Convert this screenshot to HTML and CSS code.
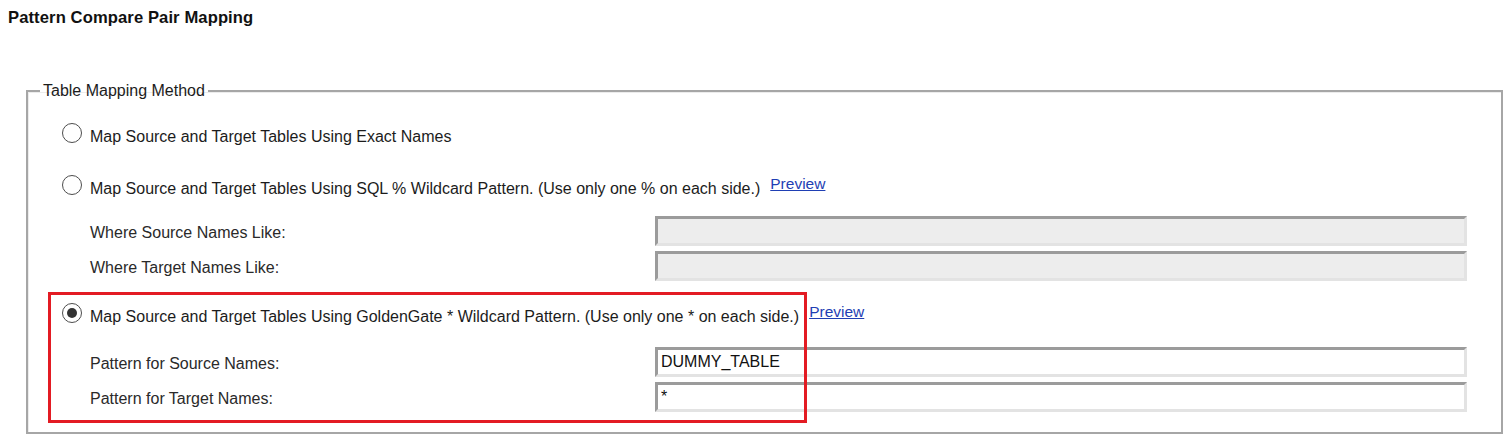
FILE: index.html
```html
<!DOCTYPE html>
<html>
<head>
<meta charset="utf-8">
<title>Pattern Compare Pair Mapping</title>
<link rel="stylesheet" href="styles.css">
</head>
<body>
<div class="page">
  <div class="page-title">Pattern Compare Pair Mapping</div>
  <fieldset class="method">
    <legend class="method-legend">Table Mapping Method</legend>
    <div class="options">
      <label class="radio-row">
        <input type="radio" name="method" class="radio">
        <span class="radio-text">Map Source and Target Tables Using Exact Names</span>
      </label>
      <div class="radio-row row-sql">
        <label class="radio-label">
          <input type="radio" name="method" class="radio">
          <span class="radio-text">Map Source and Target Tables Using SQL % Wildcard Pattern. (Use only one % on each side.)</span>
        </label>
        <a href="#" class="preview">Preview</a>
      </div>
      <div class="field-row first-field">
        <span class="field-label">Where Source Names Like:</span>
        <input type="text" class="field-input" disabled>
      </div>
      <div class="field-row">
        <span class="field-label">Where Target Names Like:</span>
        <input type="text" class="field-input" disabled>
      </div>
      <div class="gg-section">
        <div class="radio-row">
          <label class="radio-label">
            <input type="radio" name="method" class="radio" checked>
            <span class="radio-text">Map Source and Target Tables Using GoldenGate * Wildcard Pattern. (Use only one * on each side.)</span>
          </label>
          <a href="#" class="preview">Preview</a>
        </div>
        <div class="field-row first-field">
          <span class="field-label">Pattern for Source Names:</span>
          <input type="text" class="field-input" value="DUMMY_TABLE">
        </div>
        <div class="field-row">
          <span class="field-label">Pattern for Target Names:</span>
          <input type="text" class="field-input" value="*">
        </div>
        <div class="highlight"></div>
      </div>
    </div>
  </fieldset>
</div>
</body>
</html>
```

FILE: styles.css
```css
html, body {
  margin: 0;
  padding: 0;
  background: #ffffff;
}

body {
  font-family: "Liberation Sans", Arial, sans-serif;
  font-size: 16px;
  color: #1c1c1c;
}

.page {
  padding: 8px 8px 0 8px;
}

.page-title {
  font-weight: bold;
  font-size: 16.6px;
  letter-spacing: 0.1px;
  line-height: 19px;
  color: #111;
}

.method {
  margin: 54px 0 0 18px;
  padding: 0;
  border: 2px solid #a6a6a6;
  box-shadow: inset 1px 1px 0 #ececec;
  min-width: 0;
}

.method-legend {
  margin-left: 12px;
  padding: 0 3px 0 3px;
  font-size: 16px;
  line-height: 19px;
  color: #1c1c1c;
}

.options {
  display: flex;
  flex-direction: column;
  padding: 20px 34px 20px 34px;
}

.radio-row {
  display: flex;
  align-items: center;
  height: 26px;
}

.radio-label {
  display: flex;
  align-items: center;
}

.row-sql {
  margin-top: 26px;
}

.radio {
  -webkit-appearance: none;
  appearance: none;
  width: 20px;
  height: 20px;
  margin: 0 8px 0 0;
  border: 1px solid #4d4d4d;
  border-radius: 50%;
  background: #fff;
  display: grid;
  place-items: center;
  flex: none;
}

.radio:checked::before {
  content: "";
  width: 10px;
  height: 10px;
  border-radius: 50%;
  background: #333;
}

.radio-text {
  white-space: nowrap;
  margin-top: 8px;
}

.preview {
  margin-left: 10px;
  margin-bottom: 2px;
  font-size: 15.5px;
  color: #1f3fb4;
  text-decoration: underline;
}

.field-row {
  display: grid;
  grid-template-columns: 565px 1fr;
  align-items: center;
  padding-left: 28px;
  margin-top: 5px;
}

.first-field {
  margin-top: 18px;
}

.field-label {
  color: #2a2a2a;
  margin-top: 4px;
}

.field-input {
  box-sizing: border-box;
  height: 30px;
  width: 100%;
  margin: 0;
  padding: 0 0 0 3px;
  border-style: solid;
  border-width: 3px;
  border-color: #9b9b9b #e3e3e3 #e3e3e3 #9b9b9b;
  background: #fff;
  font-family: "Liberation Sans", Arial, sans-serif;
  font-size: 16px;
  color: #111;
  outline: none;
}

.field-input:disabled {
  background: #ededed;
}

.gg-section {
  position: relative;
  margin-top: 19px;
}

.gg-section .first-field {
  margin-top: 21px;
}

.highlight {
  position: absolute;
  left: -14px;
  top: -8px;
  width: 759px;
  height: 131px;
  box-sizing: border-box;
  border: 3px solid #e31b23;
  pointer-events: none;
}
```
